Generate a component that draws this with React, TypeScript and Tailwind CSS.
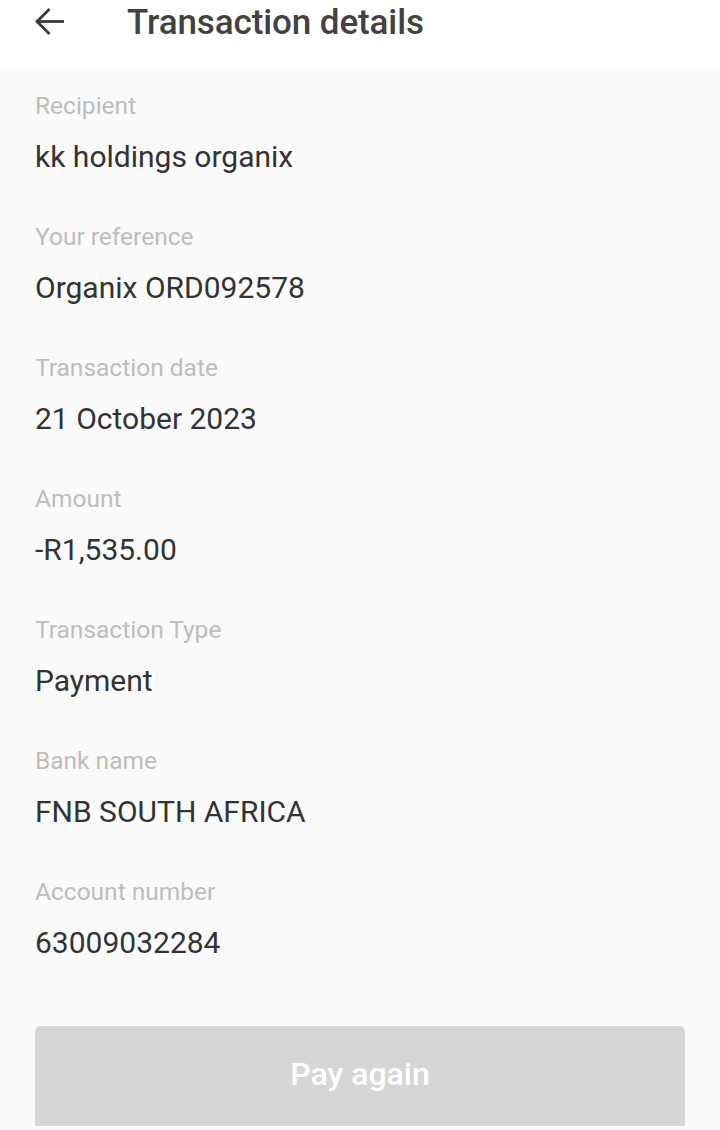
import React from "react";

const rows = [
  ["Recipient", "kk holdings organix"],
  ["Your reference", "Organix ORD092578"],
  ["Transaction date", "21 October 2023"],
  ["Amount", "-R1,535.00"],
  ["Transaction Type", "Payment"],
  ["Bank name", "FNB SOUTH AFRICA"],
  ["Account number", "63009032284"],
];

export default function App() {
  return (
    <div
      className="w-[720px] h-[1130px] overflow-hidden bg-[#fafafa] flex flex-col"
      style={{ fontFamily: "Roboto, 'Noto Sans', sans-serif" }}
    >
      <div className="h-[70px] shrink-0 bg-white flex items-start pt-[1px]">
        <div className="w-[127px] pl-[35px] pt-[6px]">
          <svg width="29" height="29" viewBox="0 0 29 29" fill="none" stroke="#3a3a3a" strokeWidth="2.8">
            <path d="M2 14.5H29" />
            <path d="M14.5 2L2 14.5L14.5 27" />
          </svg>
        </div>
        <div className="text-[35px] leading-[44px] font-medium text-[#424242] tracking-[-0.1px]">
          Transaction details
        </div>
      </div>
      <div className="flex flex-col shrink-0 px-[35px] pt-[20px]">
        {rows.map(([label, value]) => (
          <div key={label} className="h-[131px] shrink-0 flex flex-col">
            <div className="text-[24.5px] leading-[32px] text-[#bdbdbd]">{label}</div>
            <div className="mt-[19px] text-[30px] leading-[32px] text-[#333333]">{value}</div>
          </div>
        ))}
        <div className="mt-[19px] h-[100px] shrink-0 rounded-t-[6px] bg-[#d6d6d6] flex items-start justify-center pt-[28px]">
          <span className="text-[32px] leading-[40px] font-medium text-white">Pay again</span>
        </div>
      </div>
    </div>
  );
}
